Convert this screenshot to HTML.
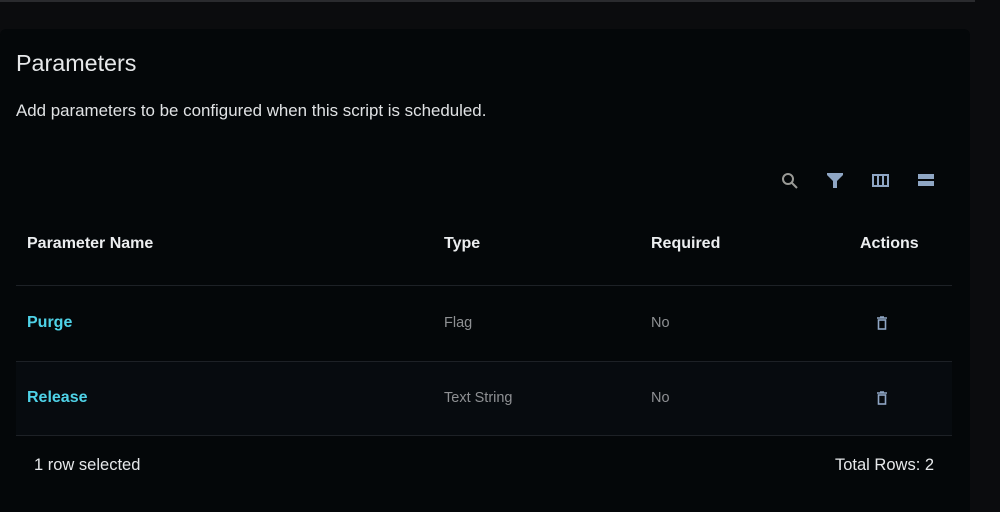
<!DOCTYPE html>
<html><head><style>
html,body{margin:0;padding:0;width:1000px;height:512px;overflow:hidden;background:#0b0c0e;font-family:"Liberation Sans",sans-serif;}
.top{position:absolute;left:0;top:0;width:975px;height:2px;background:#2a2b2e;}
.card{position:absolute;left:0;top:29px;width:970px;height:483px;background:#040709;border-radius:6px 6px 0 0;}
.t{position:absolute;white-space:nowrap;}
.line{position:absolute;left:16px;width:936px;height:1px;background:#1d2126;}
</style></head><body>
<div class="top"></div>
<div class="card"></div>
<div class="t" style="left:16px;top:50px;font-size:23.3px;color:#e6e8ea;">Parameters</div>
<div class="t" style="left:16px;top:101px;font-size:16.9px;color:#e0e2e4;">Add parameters to be configured when this script is scheduled.</div>
<svg style="position:absolute;left:780px;top:171px" width="20" height="20" viewBox="0 0 20 20"><circle cx="8" cy="8" r="5" fill="none" stroke="#9a9a96" stroke-width="2"/><path d="M12 12l5 5" stroke="#9a9a96" stroke-width="2"/></svg>
<svg style="position:absolute;left:826px;top:171px" width="18" height="20" viewBox="0 0 18 20"><path d="M1 2h16v2l-6 6v7h-4v-7l-6-6z" fill="#8fa6c4"/></svg>
<svg style="position:absolute;left:872px;top:173px" width="18" height="16" viewBox="0 0 18 16"><rect x="1" y="2" width="15" height="11" fill="none" stroke="#8fa6c4" stroke-width="2"/><path d="M6 2v11M11 2v11" stroke="#8fa6c4" stroke-width="2"/></svg>
<div style="position:absolute;left:918px;top:174px;width:16px;height:5px;background:#8fa6c4"></div>
<div style="position:absolute;left:918px;top:181px;width:16px;height:5px;background:#8fa6c4"></div>
<div class="t" style="left:27px;top:235px;font-size:16px;font-weight:bold;color:#eceef0;">Parameter Name</div>
<div class="t" style="left:444px;top:235px;font-size:16px;font-weight:bold;color:#eceef0;">Type</div>
<div class="t" style="left:651px;top:235px;font-size:16px;font-weight:bold;color:#eceef0;">Required</div>
<div class="t" style="left:860px;top:235px;font-size:16px;font-weight:bold;color:#eceef0;">Actions</div>
<div class="line" style="top:285px"></div>
<div style="position:absolute;left:16px;top:362px;width:936px;height:73px;background:#070b0f"></div>
<div class="line" style="top:361px"></div>
<div class="line" style="top:435px"></div>
<div class="t" style="left:27px;top:314px;font-size:16px;font-weight:bold;color:#4fd3e8;">Purge</div>
<div class="t" style="left:444px;top:315px;font-size:14.5px;color:#8e9093;">Flag</div>
<div class="t" style="left:651px;top:315px;font-size:14.5px;color:#8e9093;">No</div>
<div class="t" style="left:27px;top:389px;font-size:16px;font-weight:bold;color:#4fd3e8;">Release</div>
<div class="t" style="left:444px;top:390px;font-size:14.5px;color:#8e9093;">Text String</div>
<div class="t" style="left:651px;top:390px;font-size:14.5px;color:#8e9093;">No</div>
<svg style="position:absolute;left:876px;top:316px" width="12" height="14" viewBox="0 0 12 14"><path d="M1 2h10M4 1h4" stroke="#8fa6c4" stroke-width="1.6"/><rect x="2.5" y="4" width="7" height="9" fill="none" stroke="#8fa6c4" stroke-width="1.6"/></svg>
<svg style="position:absolute;left:876px;top:391px" width="12" height="14" viewBox="0 0 12 14"><path d="M1 2h10M4 1h4" stroke="#8fa6c4" stroke-width="1.6"/><rect x="2.5" y="4" width="7" height="9" fill="none" stroke="#8fa6c4" stroke-width="1.6"/></svg>
<div class="t" style="left:34px;top:456px;font-size:16.5px;color:#e6e8ea;">1 row selected</div>
<div class="t" style="left:835px;top:456px;font-size:16.5px;color:#e6e8ea;">Total Rows: 2</div>
</body></html>
